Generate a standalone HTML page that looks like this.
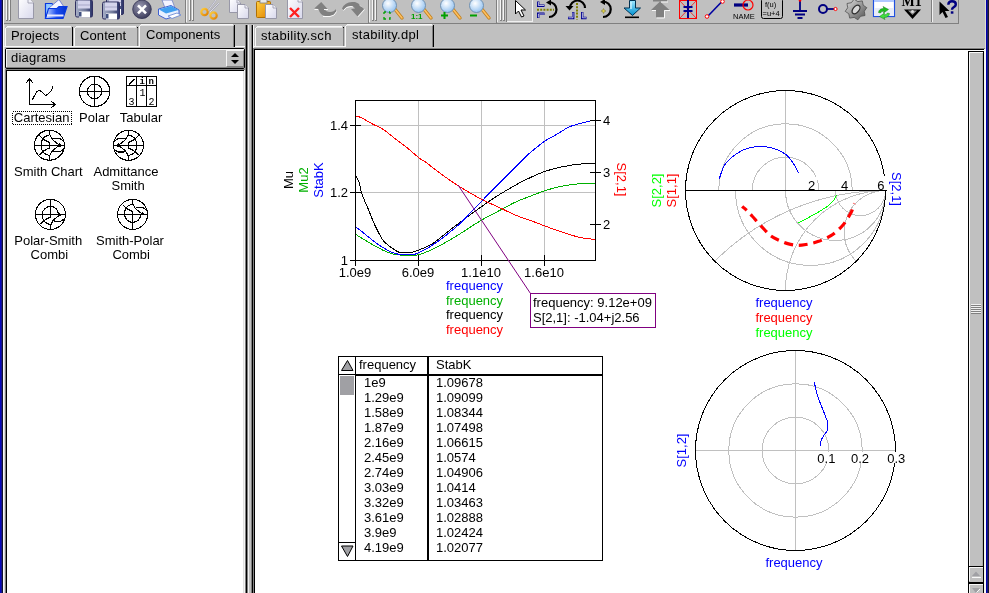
<!DOCTYPE html>
<html><head><meta charset="utf-8">
<style>
html,body{margin:0;padding:0;}
body{width:989px;height:593px;overflow:hidden;background:#c0c0c0;position:relative;font-family:"Liberation Sans",sans-serif;font-size:13px;color:#000;}
.a{position:absolute;}
.t{position:absolute;white-space:pre;line-height:1;}
svg{position:absolute;left:0;top:0;overflow:visible;}
.t,svg{will-change:transform;}
</style></head><body>
<div class="a" style="left:0px;top:0px;width:1px;height:593px;background:#0808c0;"></div>
<div class="a" style="left:1px;top:0px;width:1px;height:593px;background:#14148c;"></div>
<div class="a" style="left:2px;top:0px;width:1px;height:593px;background:#10102e;"></div>
<div class="a" style="left:3px;top:0px;width:1px;height:593px;background:#f8f8f8;"></div>
<div class="a" style="left:986px;top:0px;width:1px;height:593px;background:#0000b0;"></div>
<div class="a" style="left:987px;top:0px;width:1px;height:593px;background:#181878;"></div>
<div class="a" style="left:988px;top:0px;width:1px;height:593px;background:#1a1a2a;"></div>
<div class="a" style="left:985px;top:0px;width:1px;height:49px;background:#e0e0d0;"></div>
<div class="a" style="left:984px;top:49px;width:2px;height:544px;background:#f8f8f0;"></div>
<div class="a" style="left:4px;top:23px;width:955px;height:1px;background:#808080;"></div>
<div class="a" style="left:185px;top:0px;width:1px;height:23px;background:#808080;"></div>
<div class="a" style="left:186px;top:0px;width:1px;height:22px;background:#f0f0f0;"></div>
<div class="a" style="left:368px;top:0px;width:1px;height:23px;background:#808080;"></div>
<div class="a" style="left:369px;top:0px;width:1px;height:22px;background:#f0f0f0;"></div>
<div class="a" style="left:496px;top:0px;width:1px;height:23px;background:#808080;"></div>
<div class="a" style="left:497px;top:0px;width:1px;height:22px;background:#f0f0f0;"></div>
<div class="a" style="left:958px;top:0px;width:1px;height:23px;background:#808080;"></div>
<div class="a" style="left:6px;top:0px;width:1px;height:20px;background:#f4f4f4;"></div>
<div class="a" style="left:7px;top:0px;width:1px;height:21px;background:#808080;"></div>
<div class="a" style="left:6px;top:20px;width:2px;height:1px;background:#808080;"></div>
<div class="a" style="left:9px;top:0px;width:1px;height:20px;background:#f4f4f4;"></div>
<div class="a" style="left:10px;top:0px;width:1px;height:21px;background:#808080;"></div>
<div class="a" style="left:9px;top:20px;width:2px;height:1px;background:#808080;"></div>
<div class="a" style="left:189px;top:0px;width:1px;height:20px;background:#f4f4f4;"></div>
<div class="a" style="left:190px;top:0px;width:1px;height:21px;background:#808080;"></div>
<div class="a" style="left:189px;top:20px;width:2px;height:1px;background:#808080;"></div>
<div class="a" style="left:192px;top:0px;width:1px;height:20px;background:#f4f4f4;"></div>
<div class="a" style="left:193px;top:0px;width:1px;height:21px;background:#808080;"></div>
<div class="a" style="left:192px;top:20px;width:2px;height:1px;background:#808080;"></div>
<div class="a" style="left:372px;top:0px;width:1px;height:20px;background:#f4f4f4;"></div>
<div class="a" style="left:373px;top:0px;width:1px;height:21px;background:#808080;"></div>
<div class="a" style="left:372px;top:20px;width:2px;height:1px;background:#808080;"></div>
<div class="a" style="left:375px;top:0px;width:1px;height:20px;background:#f4f4f4;"></div>
<div class="a" style="left:376px;top:0px;width:1px;height:21px;background:#808080;"></div>
<div class="a" style="left:375px;top:20px;width:2px;height:1px;background:#808080;"></div>
<div class="a" style="left:500px;top:0px;width:1px;height:20px;background:#f4f4f4;"></div>
<div class="a" style="left:501px;top:0px;width:1px;height:21px;background:#808080;"></div>
<div class="a" style="left:500px;top:20px;width:2px;height:1px;background:#808080;"></div>
<div class="a" style="left:503px;top:0px;width:1px;height:20px;background:#f4f4f4;"></div>
<div class="a" style="left:504px;top:0px;width:1px;height:21px;background:#808080;"></div>
<div class="a" style="left:503px;top:20px;width:2px;height:1px;background:#808080;"></div>
<div class="a" style="left:506px;top:0px;width:1px;height:22px;background:#808080;"></div>
<div class="a" style="left:507px;top:0px;width:26px;height:22px;background:#c4c4c4;border-right:1px solid #f0f0f0;border-bottom:1px solid #f0f0f0;box-sizing:border-box"></div>
<div class="a" style="left:931px;top:0px;width:1px;height:22px;background:#808080;"></div>
<div class="a" style="left:932px;top:0px;width:1px;height:22px;background:#f0f0f0;"></div>
<!--TBI--><svg width="989" height="30"><defs>
<linearGradient id="gPage" x1="0" y1="0" x2="1" y2="1"><stop offset="0" stop-color="#ffffff"/><stop offset="1" stop-color="#d8d8ec"/></linearGradient>
<linearGradient id="gFold" x1="0" y1="0" x2="1" y2="0"><stop offset="0" stop-color="#c8dcff"/><stop offset="0.5" stop-color="#2050f0"/><stop offset="1" stop-color="#0030d0"/></linearGradient>
<linearGradient id="gDisk" x1="0" y1="0" x2="1" y2="0"><stop offset="0" stop-color="#a8b0c8"/><stop offset="0.6" stop-color="#707898"/><stop offset="1" stop-color="#283068"/></linearGradient>
<radialGradient id="gClose" cx="0.4" cy="0.35" r="0.7"><stop offset="0" stop-color="#9898b0"/><stop offset="1" stop-color="#383858"/></radialGradient>
<radialGradient id="gLens" cx="0.4" cy="0.35" r="0.7"><stop offset="0" stop-color="#ffffff"/><stop offset="1" stop-color="#90c0f0"/></radialGradient>
<linearGradient id="gOr" x1="0" y1="0" x2="1" y2="1"><stop offset="0" stop-color="#ffd040"/><stop offset="1" stop-color="#e08000"/></linearGradient>
<linearGradient id="gGear" x1="0" y1="0" x2="1" y2="1"><stop offset="0" stop-color="#e0e0e0"/><stop offset="1" stop-color="#505050"/></linearGradient>
<linearGradient id="gArrow" x1="0" y1="0" x2="0" y2="1"><stop offset="0" stop-color="#a0e8ff"/><stop offset="1" stop-color="#0090d0"/></linearGradient>
</defs>
<path d="M18.5 -2.5 H28 L33.5 3 V18.5 H18.5 Z" fill="url(#gPage)" stroke="#9898a8" stroke-width="1"/><path d="M28 -2.5 V3 H33.5" fill="#f0f0f8" stroke="#9898a8" stroke-width="0.8"/>
<path d="M45.5 3.5 H52 L53 5 H58 V18.5 H45.5 Z" fill="#90c8ff" stroke="#0838e0" stroke-width="1.2"/>
<path d="M49 8 L59 -0.5 L64 7 L54 15 Z" fill="#f4f4ff" stroke="#6070d0" stroke-width="0.8"/>
<path d="M48.5 8.5 H57 L59 6.5 H67 L63 18.5 H45.5 Z" fill="url(#gFold)" stroke="#0838e0" stroke-width="1.2"/>
<path d="M47 15.5 H63.5" stroke="#e8e8ff" stroke-width="2"/>
<rect x="75.5" y="0.0" width="17" height="17" rx="1.5" fill="url(#gDisk)" stroke="#303060" stroke-width="1"/><rect x="78" y="0.5" width="12" height="8" fill="#d4d4ec"/><path d="M78 5.0 H90" stroke="#a8a8c8" stroke-width="1"/><rect x="79" y="11.5" width="11" height="6" fill="#ffffff"/><rect x="79" y="12.0" width="2.5" height="4.5" fill="#405080"/>
<rect x="106.5" y="-2.5" width="17" height="17" rx="1.5" fill="url(#gDisk)" stroke="#303060" stroke-width="1"/><rect x="109" y="-2" width="12" height="8" fill="#d4d4ec"/><path d="M109 2.5 H121" stroke="#a8a8c8" stroke-width="1"/><rect x="110" y="9" width="11" height="6" fill="#ffffff"/><rect x="110" y="9.5" width="2.5" height="4.5" fill="#405080"/>
<rect x="102.5" y="2.0" width="17" height="17" rx="1.5" fill="url(#gDisk)" stroke="#303060" stroke-width="1"/><rect x="105" y="2.5" width="12" height="8" fill="#d4d4ec"/><path d="M105 7.0 H117" stroke="#a8a8c8" stroke-width="1"/><rect x="106" y="13.5" width="11" height="6" fill="#ffffff"/><rect x="106" y="14.0" width="2.5" height="4.5" fill="#405080"/>
<circle cx="142" cy="9.3" r="9.3" fill="url(#gClose)" stroke="#303050" stroke-width="0.8"/><path d="M138 5.3 L146 13.3 M146 5.3 L138 13.3" stroke="#fff" stroke-width="2.6"/>
<path d="M162 0 L172 0 L175 8 L165 8 Z" fill="#f4f4ff" stroke="#7080c0" stroke-width="0.8"/>
<path d="M158.5 9 L171 5.5 L179 10 L179 15 L166 19 L158.5 15 Z" fill="#e8f0ff" stroke="#4060d0" stroke-width="1"/>
<path d="M159 9.5 L171 6 L178.5 10 L166 13.5 Z" fill="#40a0f0"/>
<path d="M168 16 L177 13 L181 15 L172 18.5 Z" fill="#ffffff" stroke="#6080d0" stroke-width="0.8"/>
<path d="M208 11 L216 0 M210 12 L219 3" stroke="#a0a0b0" stroke-width="1.6"/><path d="M208 11 L216 0 M210 12 L219 3" stroke="#f0f0f8" stroke-width="0.7"/>
<circle cx="204.5" cy="12" r="3.2" fill="none" stroke="url(#gOr)" stroke-width="2.2"/><circle cx="213.5" cy="15.5" r="3.2" fill="none" stroke="url(#gOr)" stroke-width="2.2"/>
<path d="M229.5 -0.5 H237 L240.5 3 V12.5 H229.5 Z" fill="url(#gPage)" stroke="#9898a8" stroke-width="1"/><path d="M237 -0.5 V3 H240.5" fill="#f0f0f8" stroke="#9898a8" stroke-width="0.8"/>
<path d="M237.5 4.5 H245 L248.5 8 V18.5 H237.5 Z" fill="url(#gPage)" stroke="#9898a8" stroke-width="1"/><path d="M245 4.5 V8 H248.5" fill="#f0f0f8" stroke="#9898a8" stroke-width="0.8"/>
<rect x="256.5" y="1.5" width="14" height="16" rx="1" fill="url(#gOr)" stroke="#b07000" stroke-width="1"/><rect x="260" y="-1" width="7" height="4" fill="#e8e8e8" stroke="#808080" stroke-width="0.8"/>
<path d="M265.5 4.5 H273 L276.5 8 V18.5 H265.5 Z" fill="url(#gPage)" stroke="#9898a8" stroke-width="1"/><path d="M273 4.5 V8 H276.5" fill="#f0f0f8" stroke="#9898a8" stroke-width="0.8"/>
<path d="M287.5 -2.5 H298 L302.5 2 V18.5 H287.5 Z" fill="url(#gPage)" stroke="#9898a8" stroke-width="1"/><path d="M298 -2.5 V2 H302.5" fill="#f0f0f8" stroke="#9898a8" stroke-width="0.8"/>
<path d="M290 8 L299 17 M299 8 L290 17" stroke="#ff2020" stroke-width="2.4"/>
<path d="M314.2 8.5 L321.2 2 L327.6 9 L324.5 9 Q326 12 330 12 Q334 12 336 9 L336 12 Q334 16 329 16 L325 16 Q320 15 318.5 9 Z" fill="#808080"/>
<path d="M323 16.5 H330 Q335 16 336.5 11.5 M314.5 9.5 h3.5 M324 9.5 h4" fill="none" stroke="#f8f8f8" stroke-width="1"/>
<path d="M342 8.5 Q345 2 352 2 L355 2 Q359 3 360.5 6 L364 9 L357.5 16.5 L351 9 L355 8.5 Q354 6 351 6 Q346 6 343.5 10 Z" fill="#808080"/>
<path d="M343.5 10.5 Q346 6.5 351 6.5 L353 7 M358 16.8 L364.5 9.5 M360 5.5 L361 6.5" fill="none" stroke="#f8f8f8" stroke-width="1"/>
<path d="M394 8 L402 18" stroke="#c08020" stroke-width="3.4" stroke-linecap="round"/><path d="M394 8 L402 18" stroke="#ffc060" stroke-width="1.6" stroke-linecap="round"/>
<circle cx="389.5" cy="5.5" r="7" fill="url(#gLens)" stroke="#7090b0" stroke-width="1"/>
<path d="M384 12 h2 M384 12 v2 M384 17 v2 h2 M389 12 h1 M390 12 v2 M390 17 v2 h-1" stroke="#00a000" stroke-width="1.3" fill="none"/>
<path d="M423 8 L431 18" stroke="#c08020" stroke-width="3.4" stroke-linecap="round"/><path d="M423 8 L431 18" stroke="#ffc060" stroke-width="1.6" stroke-linecap="round"/>
<circle cx="418.5" cy="5.5" r="7" fill="url(#gLens)" stroke="#7090b0" stroke-width="1"/>
<text x="411" y="19" font-family="Liberation Sans" font-weight="bold" font-size="8" fill="#00a000">1:1</text>
<path d="M452 8 L460 18" stroke="#c08020" stroke-width="3.4" stroke-linecap="round"/><path d="M452 8 L460 18" stroke="#ffc060" stroke-width="1.6" stroke-linecap="round"/>
<circle cx="447.5" cy="5.5" r="7" fill="url(#gLens)" stroke="#7090b0" stroke-width="1"/>
<path d="M441 15.5 h7 M444.5 12 v7" stroke="#00a000" stroke-width="2"/>
<path d="M481 8 L489 18" stroke="#c08020" stroke-width="3.4" stroke-linecap="round"/><path d="M481 8 L489 18" stroke="#ffc060" stroke-width="1.6" stroke-linecap="round"/>
<circle cx="476.5" cy="5.5" r="7" fill="url(#gLens)" stroke="#7090b0" stroke-width="1"/>
<path d="M470 15.5 h7" stroke="#00a000" stroke-width="2"/>
<path d="M515.5 0.5 L515.5 14 L518.5 11 L521.5 17 L524 16 L521 10 L525.5 10 Z" fill="#fff" stroke="#000" stroke-width="1"/>
<path d="M538.2 1.5 V5.7 H544.5 M538.2 18 V13.8 H544.5" fill="none" stroke="#000090" stroke-width="2.4"/><path d="M538.4 2 V5.5 H544 M538.4 17.5 V14 H544" fill="none" stroke="#fff" stroke-width="0.7"/>
<path d="M537 9.7 H554" stroke="#808000" stroke-width="2" stroke-dasharray="2 1.2"/>
<path d="M549 2 A7.5 7.5 0 0 1 549 17" fill="none" stroke="#000" stroke-width="2.2"/><path d="M546 2.5 L551 -0.5 L551 5.5 Z" fill="#000"/>
<path d="M573.2 12 V18 H568 M582.2 12 V18 H586.5" fill="none" stroke="#000090" stroke-width="2.4"/><path d="M573 12.5 V17.8 H568.5 M582.4 12.5 V17.8 H586" fill="none" stroke="#fff" stroke-width="0.7"/>
<path d="M577 3 V19.5" stroke="#808000" stroke-width="2" stroke-dasharray="2 1.2"/>
<path d="M570 8 A7.5 7.5 0 0 1 585 8" fill="none" stroke="#000" stroke-width="2.2"/><path d="M565.5 6 L573.5 6 L569.5 10.5 Z" fill="#000"/>
<path d="M603 1.5 A7.5 7.5 0 0 1 603 17" fill="none" stroke="#000" stroke-width="2.2"/><path d="M600 2 L605 -1 L605 5 Z" fill="#000"/><path d="M603.5 8.5 L604.3 10.2 L606 11 L604.3 11.8 L603.5 13.5 L602.7 11.8 L601 11 L602.7 10.2 Z" fill="#e0d040" stroke="#606020" stroke-width="0.4"/>
<path d="M629.5 0.5 H635.5 V8 H640.5 L632.5 15.5 L624 8 H629.5 Z" fill="url(#gArrow)" stroke="#003050" stroke-width="1"/><path d="M631 2 V9" stroke="#e0f8ff" stroke-width="1.2"/><rect x="625" y="16.5" width="14" height="1.6" fill="#000"/>
<path d="M653 0 H667 V1.5 H653 Z M660 1.5 L669.5 10 H664 V17.5 H656 V10 H651 Z" fill="#808080"/><path d="M664.5 10.5 V18 H656.5 M664.5 10.5 H670 M652 10.5 H656 M661 2 L668 2" fill="none" stroke="#f8f8f8" stroke-width="1"/>
<rect x="679.5" y="0.5" width="17" height="18" fill="none" stroke="#ff0000" stroke-width="1"/><path d="M680 1 L696 18 M696 1 L680 18" stroke="#ff0000" stroke-width="0.7"/><path d="M688 0 V18" stroke="#000090" stroke-width="2"/><path d="M683.5 7 H692.5 M683.5 11 H692.5" stroke="#000090" stroke-width="1.8"/>
<path d="M707.5 16.5 L722 1.5" stroke="#0000a0" stroke-width="1.6"/><circle cx="707" cy="16.5" r="1.8" fill="#fff" stroke="#ff0000" stroke-width="1"/><circle cx="722.5" cy="1.5" r="1.8" fill="#fff" stroke="#ff0000" stroke-width="1"/>
<path d="M734 5 H748" stroke="#000080" stroke-width="3.2"/><circle cx="748" cy="5" r="5" fill="none" stroke="#ff0000" stroke-width="1.2"/><text x="733" y="19" font-family="Liberation Sans" font-size="7.5" fill="#000">NAME</text>
<rect x="761.5" y="-1.5" width="21" height="20" rx="2" fill="none" stroke="#000" stroke-width="1"/><text x="765" y="7" font-family="Liberation Sans" font-size="7.5">f(u)</text><text x="762.5" y="15.5" font-family="Liberation Sans" font-size="7.5">=u+4</text>
<path d="M800 1 V11 M793 11 H807 M795 14.5 H805 M797.5 18 H802.5" stroke="#000080" stroke-width="1.8"/><circle cx="800" cy="0.5" r="1.3" fill="#ff0000"/>
<circle cx="823" cy="9" r="4" fill="none" stroke="#000080" stroke-width="2"/><path d="M827 9 H834" stroke="#000080" stroke-width="1.8"/><circle cx="835.5" cy="9" r="1.6" fill="#fff" stroke="#ff0000" stroke-width="1"/>
<path d="M866.8 7.7 L864.3 11.2 L865.0 15.5 L860.6 16.3 L857.9 19.8 L854.2 17.4 L849.7 18.1 L848.8 13.8 L845.2 11.3 L847.7 7.8 L847.0 3.5 L851.4 2.7 L854.1 -0.8 L857.8 1.6 L862.3 0.9 L863.2 5.2 Z" fill="url(#gGear)" stroke="#505050" stroke-width="0.8"/>
<ellipse cx="856" cy="9.5" rx="5" ry="3" transform="rotate(-50 856 9.5)" fill="#d8d8d8" stroke="#303030" stroke-width="1.3"/>
<rect x="873.5" y="-1.5" width="21" height="18" fill="#fff" stroke="#2050e0" stroke-width="1.2"/><rect x="874" y="-1" width="20" height="3" fill="#b0c8ff"/><rect x="874" y="8" width="20" height="8" fill="#e8ecf8"/>
<path d="M878.5 12.5 Q879 8.5 884 8.5 L883 6.5 L888.5 9.5 L883.5 13 L884 11 Q881.5 11 880.5 13 Z" fill="#20c020" stroke="#108010" stroke-width="0.5"/><path d="M889.5 13.5 Q889 17.5 884 17.5 L885 19.5 L879.5 16.5 L884.5 13 L884 15 Q886.5 15 887.5 13 Z" fill="#40e040" stroke="#108010" stroke-width="0.5"/>
<text x="901.5" y="6" font-family="Liberation Serif" font-weight="bold" font-size="14" fill="#000">M1</text><path d="M904 9.5 L921 9.5 L912.5 19 Z" fill="#000"/><path d="M908 10.5 L917 10.5 L912.5 15 Z" fill="#909090"/><circle cx="912.5" cy="11.5" r="1.5" fill="#e0e0e0"/>
<path d="M939.5 1.5 L939.5 15 L942.5 12 L945.5 18 L948 17 L945 11 L949.5 11 Z" fill="#000"/><path d="M948.3 4.8 Q948.5 1.3 952 1.3 Q955.8 1.3 955.8 4.3 Q955.8 6.3 953.5 7.3 Q952 8 952 9.8" fill="none" stroke="#000080" stroke-width="2.4"/><rect x="950.8" y="11.3" width="2.6" height="2.4" fill="#000080"/>
</svg><!--/TBI-->
<div class="a" style="left:4px;top:25px;width:1px;height:568px;background:#d8d8d8;"></div>
<div class="a" style="left:245px;top:25px;width:1px;height:568px;background:#808080;"></div>
<div class="a" style="left:246px;top:25px;width:1px;height:568px;background:#000;"></div>
<div class="a" style="left:247px;top:25px;width:1px;height:568px;background:#808080;"></div>
<div class="a" style="left:248px;top:25px;width:1px;height:568px;background:#f0f0f0;"></div>
<div class="a" style="left:251px;top:25px;width:1px;height:568px;background:#808080;"></div>
<div class="a" style="left:252px;top:25px;width:1px;height:568px;background:#000;"></div>
<div class="a" style="left:5px;top:26px;width:68px;height:21px;background:#c0c0c0;"></div>
<div class="a" style="left:7px;top:26px;width:64px;height:1px;background:#f8f8f8;"></div>
<div class="a" style="left:6px;top:27px;width:65px;height:1px;background:#e4e4e4;"></div>
<div class="a" style="left:5px;top:28px;width:1px;height:19px;background:#f8f8f8;"></div>
<div class="a" style="left:6px;top:27px;width:1px;height:1px;background:#f8f8f8;"></div>
<div class="a" style="left:72px;top:27px;width:1px;height:19px;background:#808080;"></div>
<div class="a" style="left:72px;top:27px;width:1px;height:1px;background:#000;"></div>
<div class="a" style="left:72px;top:27px;width:1px;height:19px;background:#000;"></div>
<div class="a" style="left:74px;top:26px;width:64px;height:21px;background:#c0c0c0;"></div>
<div class="a" style="left:76px;top:26px;width:60px;height:1px;background:#f8f8f8;"></div>
<div class="a" style="left:75px;top:27px;width:61px;height:1px;background:#e4e4e4;"></div>
<div class="a" style="left:74px;top:28px;width:1px;height:19px;background:#f8f8f8;"></div>
<div class="a" style="left:75px;top:27px;width:1px;height:1px;background:#f8f8f8;"></div>
<div class="a" style="left:137px;top:27px;width:1px;height:19px;background:#808080;"></div>
<div class="a" style="left:137px;top:27px;width:1px;height:1px;background:#000;"></div>
<div class="a" style="left:139px;top:24px;width:96px;height:23px;background:#c0c0c0;"></div>
<div class="a" style="left:141px;top:24px;width:92px;height:1px;background:#f8f8f8;"></div>
<div class="a" style="left:140px;top:25px;width:93px;height:1px;background:#e4e4e4;"></div>
<div class="a" style="left:139px;top:26px;width:1px;height:21px;background:#f8f8f8;"></div>
<div class="a" style="left:140px;top:25px;width:1px;height:1px;background:#f8f8f8;"></div>
<div class="a" style="left:233px;top:26px;width:1px;height:21px;background:#808080;"></div>
<div class="a" style="left:234px;top:25px;width:1px;height:22px;background:#000;"></div>
<div class="a" style="left:4px;top:46px;width:135px;height:1px;background:#f8f8f8;"></div>
<div class="a" style="left:235px;top:46px;width:10px;height:1px;background:#f8f8f8;"></div>
<div class="t" style="left:11px;top:29px;letter-spacing:0.2px">Projects</div>
<div class="t" style="left:80px;top:29px;letter-spacing:0.1px">Content</div>
<div class="t" style="left:146px;top:28px;letter-spacing:0.05px">Components</div>
<div class="a" style="left:5px;top:48px;width:240px;height:21px;background:#c0c0c0;box-sizing:border-box;border:1px solid #000;border-radius:2px"></div>
<div class="a" style="left:6px;top:49px;width:238px;height:1px;background:#f4f4f4;"></div>
<div class="a" style="left:6px;top:49px;width:1px;height:18px;background:#f4f4f4;"></div>
<div class="a" style="left:6px;top:67px;width:238px;height:1px;background:#808080;"></div>
<div class="a" style="left:226px;top:50px;width:18px;height:17px;background:#c0c0c0;box-sizing:border-box;border-left:1px solid #f4f4f4;border-top:1px solid #f4f4f4;border-right:1px solid #808080;border-bottom:1px solid #808080"></div>
<svg width="989" height="593"><path d="M235 53 L239 57 L231 57 Z M231 60 L239 60 L235 64 Z" fill="#000"/></svg>
<div class="t" style="left:11px;top:51px;letter-spacing:0.2px">diagrams</div>
<div class="a" style="left:5px;top:69px;width:240px;height:524px;background:#808080;"></div>
<div class="a" style="left:6px;top:70px;width:238px;height:523px;background:#000;"></div>
<div class="a" style="left:7px;top:71px;width:236px;height:522px;background:#fff;"></div>
<div class="a" style="left:243px;top:71px;width:1px;height:522px;background:#e0e0e0;"></div>
<div class="a" style="left:244px;top:70px;width:1px;height:523px;background:#f4f4f4;"></div>
<!--ICONS--><svg width="989" height="593"><g fill="none" stroke="#000" stroke-width="1.1" stroke-linecap="square" shape-rendering="crispEdges">
<path d="M29.5 78.5 V104.5 H55.5 M26.5 82.5 L29.5 78.5 L32.5 82.5 M51.5 101.5 L55.5 104.5 L51.5 107.5"/>
<path d="M32.5 99.3 L36.9 91.6 L39.6 90.3 L41.6 91.6 L45.6 95.5 L48.3 93.9 L51.7 90.2 L52.7 86.2" stroke-linejoin="round"/>
<circle cx="94.6" cy="91.4" r="15.2"/><circle cx="94.6" cy="91.4" r="7.3"/><path d="M79.39999999999999 91.4 H109.8 M94.6 76.2 V106.60000000000001"/>
<rect x="126.5" y="76.5" width="30" height="30" stroke-width="1"/><path d="M127 85.5 H156 M136.5 77 V106 M146.5 77 V106" stroke-width="1"/>
<path d="M129.5 84 L134 79.5" stroke-width="1.2"/>
</g>
<g font-family="Liberation Mono" font-size="9" fill="#000"><text x="139.5" y="84" font-weight="bold">i</text><text x="148.5" y="84" font-weight="bold">n</text><text x="139.5" y="96" font-size="10">1</text><text x="128.5" y="105" font-size="10">3</text><text x="148.5" y="105" font-size="10">2</text></g>
<g fill="none" stroke="#000" stroke-width="1.1" shape-rendering="crispEdges">
<circle cx="49.4" cy="145.2" r="15"/><path d="M34.4 145.2 H64.4"/>
<path d="M49.4 130.2 L49.4 134.0 L50.8 136.8 L52.2 139.3 L54.7 141.5 L57.5 143.6 L59.4 145.2 M39.4 135.4 L43.0 139.0 L46.4 141.0 L49.4 142.4 L49.4 145.2 M41.3 145.2 L41.9 140.7 L44.1 137.3 L46.4 136.0 L48.6 135.1 L50.3 134.8 M51.9 139.0 L54.1 138.5 L59.7 138.5 L63.0 140.7 M49.4 160.2 L49.4 156.4 L50.8 153.6 L52.2 151.1 L54.7 148.9 L57.5 146.8 L59.4 145.2 M39.4 155.0 L43.0 151.4 L46.4 149.4 L49.4 148.0 L49.4 145.2 M41.3 145.2 L41.9 149.7 L44.1 153.1 L46.4 154.4 L48.6 155.3 L50.3 155.6 M51.9 151.4 L54.1 151.9 L59.7 151.9 L63.0 149.7"/>
<circle cx="59.4" cy="145.2" r="1.3" fill="#000"/>
<circle cx="128.5" cy="145.3" r="15"/><path d="M113.5 145.3 H143.5"/>
<path d="M128.5 130.3 L128.5 134.1 L127.1 136.9 L125.7 139.4 L123.2 141.6 L120.4 143.7 L118.5 145.3 M138.5 135.5 L134.9 139.1 L131.5 141.1 L128.5 142.5 L128.5 145.3 M136.6 145.3 L136.0 140.8 L133.8 137.4 L131.5 136.1 L129.3 135.2 L127.6 134.9 M126.0 139.1 L123.8 138.6 L118.2 138.6 L114.9 140.8 M128.5 160.3 L128.5 156.5 L127.1 153.7 L125.7 151.2 L123.2 149.0 L120.4 146.9 L118.5 145.3 M138.5 155.1 L134.9 151.5 L131.5 149.5 L128.5 148.1 L128.5 145.3 M136.6 145.3 L136.0 149.8 L133.8 153.2 L131.5 154.5 L129.3 155.4 L127.6 155.7 M126.0 151.5 L123.8 152.0 L118.2 152.0 L114.9 149.8"/>
<circle cx="118.5" cy="145.3" r="1.3" fill="#000"/>
<circle cx="50.4" cy="214.4" r="15"/><path d="M35.4 214.4 H65.4"/>
<path d="M42.4 214.4 A8 8 0 0 1 58.4 214.4 M50.4 214.4 V199.4 M50.4 229.4 L50.4 225.6 L51.8 222.8 L53.2 220.3 L55.7 218.1 L58.5 216.0 L60.4 214.4 M40.4 224.2 L44.0 220.6 L47.4 218.6 L50.4 217.2 L50.4 214.4 M42.3 214.4 L42.9 218.9 L45.1 222.3 L47.4 223.6 L49.6 224.5 L51.3 224.8 M52.9 220.6 L55.1 221.1 L60.7 221.1 L64.0 218.9"/>
<circle cx="59.9" cy="214.9" r="1" fill="#000"/>
<circle cx="132.6" cy="214.4" r="15"/><path d="M117.6 214.4 H147.6"/>
<path d="M132.6 199.4 L132.6 203.2 L134.0 206.0 L135.4 208.5 L137.9 210.7 L140.7 212.8 L142.6 214.4 M122.6 204.6 L126.2 208.2 L129.6 210.2 L132.6 211.6 L132.6 214.4 M124.5 214.4 L125.1 209.9 L127.3 206.5 L129.6 205.2 L131.8 204.3 L133.5 204.0 M135.1 208.2 L137.3 207.7 L142.9 207.7 L146.2 209.9 M124.6 214.4 A8 8 0 0 0 140.6 214.4 M132.6 214.4 V229.4"/>
<circle cx="142.1" cy="213.9" r="1" fill="#000"/>
</g>
<g font-family="Liberation Sans" font-size="13" fill="#000" text-anchor="middle">
<text x="41.6" y="121.6">Cartesian</text>
<text x="94.3" y="121.6">Polar</text>
<text x="141" y="121.6">Tabular</text>
<text x="48.4" y="175.8">Smith Chart</text>
<text x="126" y="175.8">Admittance</text>
<text x="128.1" y="190.4">Smith</text>
<text x="48.2" y="245">Polar-Smith</text>
<text x="49.4" y="259.4">Combi</text>
<text x="130" y="245">Smith-Polar</text>
<text x="131.2" y="259.4">Combi</text>
</g>
<rect x="12.5" y="111.5" width="59" height="13" fill="none" stroke="#000" stroke-width="1" stroke-dasharray="1 1" shape-rendering="crispEdges"/>
</svg><!--/ICONS-->
<div class="a" style="left:253px;top:25px;width:1px;height:568px;background:#f4f4f4;"></div>
<div class="a" style="left:255px;top:26px;width:89px;height:21px;background:#c0c0c0;"></div>
<div class="a" style="left:257px;top:26px;width:85px;height:1px;background:#f8f8f8;"></div>
<div class="a" style="left:256px;top:27px;width:86px;height:1px;background:#e4e4e4;"></div>
<div class="a" style="left:255px;top:28px;width:1px;height:19px;background:#f8f8f8;"></div>
<div class="a" style="left:256px;top:27px;width:1px;height:1px;background:#f8f8f8;"></div>
<div class="a" style="left:343px;top:27px;width:1px;height:19px;background:#808080;"></div>
<div class="a" style="left:343px;top:27px;width:1px;height:1px;background:#000;"></div>
<div class="a" style="left:345px;top:24px;width:89px;height:23px;background:#c0c0c0;"></div>
<div class="a" style="left:347px;top:24px;width:85px;height:1px;background:#f8f8f8;"></div>
<div class="a" style="left:346px;top:25px;width:86px;height:1px;background:#e4e4e4;"></div>
<div class="a" style="left:345px;top:26px;width:1px;height:21px;background:#f8f8f8;"></div>
<div class="a" style="left:346px;top:25px;width:1px;height:1px;background:#f8f8f8;"></div>
<div class="a" style="left:432px;top:26px;width:1px;height:21px;background:#808080;"></div>
<div class="a" style="left:433px;top:25px;width:1px;height:22px;background:#000;"></div>
<div class="a" style="left:253px;top:46px;width:92px;height:1px;background:#f8f8f8;"></div>
<div class="a" style="left:434px;top:47px;width:550px;height:1px;background:#c8c8c8;"></div>
<div class="t" style="left:261px;top:29px;letter-spacing:0.35px">stability.sch</div>
<div class="t" style="left:352px;top:28px;letter-spacing:0.3px">stability.dpl</div>
<div class="a" style="left:253px;top:48px;width:732px;height:1px;background:#808080;"></div>
<div class="a" style="left:253px;top:48px;width:1px;height:545px;background:#808080;"></div>
<div class="a" style="left:254px;top:49px;width:730px;height:1px;background:#000;"></div>
<div class="a" style="left:254px;top:49px;width:1px;height:544px;background:#000;"></div>
<div class="a" style="left:255px;top:50px;width:729px;height:543px;background:#fff;"></div>
<div class="a" style="left:984px;top:49px;width:1px;height:544px;background:#f4f4f4;"></div>
<div class="a" style="left:968px;top:51px;width:16px;height:516px;background:#c0c0c0;box-sizing:border-box;border:1px solid #000"></div>
<div class="a" style="left:969px;top:52px;width:14px;height:1px;background:#f8f8f8;"></div>
<div class="a" style="left:969px;top:52px;width:1px;height:514px;background:#f8f8f8;"></div>
<div class="a" style="left:982px;top:53px;width:1px;height:513px;background:#a8a8a8;"></div>
<div class="a" style="left:971px;top:304px;width:10px;height:1px;background:#f0f0f0;"></div>
<div class="a" style="left:971px;top:305px;width:10px;height:1px;background:#808080;"></div>
<div class="a" style="left:971px;top:306px;width:10px;height:1px;background:#f0f0f0;"></div>
<div class="a" style="left:971px;top:307px;width:10px;height:1px;background:#808080;"></div>
<div class="a" style="left:971px;top:308px;width:10px;height:1px;background:#f0f0f0;"></div>
<div class="a" style="left:971px;top:309px;width:10px;height:1px;background:#808080;"></div>
<div class="a" style="left:971px;top:310px;width:10px;height:1px;background:#f0f0f0;"></div>
<div class="a" style="left:971px;top:311px;width:10px;height:1px;background:#808080;"></div>
<div class="a" style="left:971px;top:312px;width:10px;height:1px;background:#f0f0f0;"></div>
<div class="a" style="left:971px;top:313px;width:10px;height:1px;background:#808080;"></div>
<div class="a" style="left:968px;top:566px;width:16px;height:17px;background:#c0c0c0;box-sizing:border-box;border:1px solid #000"></div>
<div class="a" style="left:969px;top:567px;width:14px;height:1px;background:#f8f8f8;"></div>
<div class="a" style="left:969px;top:567px;width:1px;height:14px;background:#f8f8f8;"></div>
<div class="a" style="left:968px;top:583px;width:16px;height:17px;background:#c0c0c0;box-sizing:border-box;border:1px solid #000"></div>
<div class="a" style="left:969px;top:584px;width:14px;height:1px;background:#f8f8f8;"></div>
<div class="a" style="left:969px;top:584px;width:1px;height:14px;background:#f8f8f8;"></div>
<svg width="989" height="593"><path d="M976 571.5 L980 576 L972 576 Z" fill="#a0a0a4"/><path d="M972 577.5 h9" stroke="#f8f8f8"/><path d="M972 588 L980 588 L976 593 Z" fill="#a0a0a4"/><path d="M976.5 592.5 L980 589" stroke="#f8f8f8"/></svg>
<!--CANVAS--><svg width="989" height="593"><defs><clipPath id="cv"><rect x="255" y="50" width="713" height="543"/></clipPath></defs><g clip-path="url(#cv)">
<g stroke="#c0c0c0" stroke-width="1" shape-rendering="crispEdges">
<path d="M418.5 101 V260"/>
<path d="M481.5 101 V260"/>
<path d="M544.5 101 V260"/>
<path d="M356 125.5 H595"/>
<path d="M356 192.5 H595"/>
</g>
<g fill="none" stroke-width="1" stroke-linejoin="round" shape-rendering="crispEdges">
<path d="M355.0 234.0 C358.4 236.0 369.8 243.1 375.2 246.1 C380.6 249.1 383.6 250.7 387.4 252.2 C391.2 253.7 393.7 254.4 398.2 254.9 C402.7 255.4 410.3 255.5 414.4 255.3 C418.4 255.1 419.1 254.7 422.5 253.5 C425.9 252.3 429.3 251.1 435.0 248.2 C440.7 245.3 449.0 240.6 456.6 236.0 C464.2 231.4 473.2 225.0 480.9 220.5 C488.5 216.0 496.8 212.0 502.5 209.0 C508.2 206.0 510.7 204.3 515.0 202.3 C519.3 200.3 523.5 198.8 528.5 196.9 C533.5 195.0 539.5 192.5 544.7 190.8 C549.9 189.1 553.6 187.9 559.5 186.7 C565.4 185.5 573.9 184.2 579.8 183.6 C585.7 183.0 592.5 183.4 595.0 183.3" stroke="#00b000"/>
<path d="M355.0 174.5 C355.7 175.8 357.9 178.8 359.0 182.0 C360.1 185.2 360.1 188.9 361.7 193.5 C363.3 198.1 366.2 204.3 368.5 209.7 C370.8 215.1 372.6 220.6 375.2 225.9 C377.8 231.2 380.4 237.2 384.0 241.4 C387.6 245.6 393.9 249.2 396.8 251.1 C399.7 252.9 399.1 252.3 401.6 252.5 C404.1 252.7 408.9 252.6 411.7 252.2 C414.5 251.8 415.7 251.2 418.4 250.2 C421.1 249.2 425.1 247.5 427.9 246.1 C430.7 244.7 430.4 245.4 435.0 242.0 C439.6 238.6 448.0 231.4 455.2 225.9 C462.4 220.4 471.4 213.8 478.2 209.0 C484.9 204.2 489.6 200.8 495.7 196.9 C501.8 193.0 510.1 188.2 515.0 185.4 C519.9 182.6 520.1 182.3 525.1 180.0 C530.1 177.7 538.5 173.7 544.7 171.5 C550.9 169.3 556.4 168.0 562.2 166.8 C568.1 165.6 574.3 164.6 579.8 164.1 C585.3 163.6 592.5 164.0 595.0 164.0" stroke="#000"/>
<path d="M355.0 227.5 C355.7 227.8 355.6 226.8 359.0 229.3 C362.4 231.8 370.5 238.8 375.2 242.3 C379.9 245.8 383.6 248.2 387.4 250.2 C391.2 252.2 394.1 253.5 398.2 254.2 C402.2 254.9 408.3 254.7 411.7 254.5 C415.1 254.3 414.5 254.7 418.4 252.9 C422.3 251.1 428.6 247.9 435.0 243.5 C441.4 239.1 450.1 232.3 456.6 226.6 C463.1 220.8 468.0 215.2 474.1 209.0 C480.2 202.8 488.3 194.2 493.0 189.4 C497.7 184.6 498.8 183.7 502.5 180.0 C506.2 176.3 510.9 171.6 515.0 167.5 C519.1 163.4 523.7 158.5 527.1 155.3 C530.5 152.2 532.3 150.9 535.2 148.6 C538.1 146.2 541.3 143.4 544.7 141.2 C548.1 138.9 551.5 137.5 555.5 135.1 C559.5 132.7 565.2 128.8 569.0 127.0 C572.8 125.2 574.8 125.0 578.4 124.0 C582.0 123.0 587.8 121.5 590.6 120.9 C593.4 120.3 594.3 120.6 595.0 120.5" stroke="#0000ff"/>
<path d="M355.0 116.5 C355.9 116.6 357.5 116.0 360.4 117.3 C363.3 118.5 368.7 122.0 372.5 124.0 C376.3 126.0 379.5 126.9 383.3 129.4 C387.1 131.9 391.2 135.8 395.5 139.1 C399.8 142.4 405.1 146.2 409.0 149.3 C412.9 152.5 416.4 155.9 419.1 158.0 C421.8 160.1 422.6 159.9 425.2 161.8 C427.8 163.7 430.9 166.3 435.0 169.3 C439.1 172.3 445.0 176.9 449.5 180.0 C454.0 183.1 456.6 184.8 462.0 188.1 C467.4 191.4 475.4 196.1 482.2 199.6 C488.9 203.1 497.0 206.4 502.5 209.0 C508.0 211.6 510.7 213.2 515.0 215.0 C519.3 216.8 523.5 218.0 528.5 219.8 C533.5 221.6 539.5 224.0 544.7 225.9 C549.9 227.8 553.6 229.4 559.5 231.3 C565.4 233.2 573.9 236.1 579.8 237.4 C585.7 238.8 592.5 239.1 595.0 239.4" stroke="#ff0000"/>
</g>
<g stroke="#000" stroke-width="1" fill="none" shape-rendering="crispEdges">
<rect x="355.5" y="100.5" width="240" height="160"/>
<path d="M350 125.5 H361"/>
<path d="M350 192.5 H361"/>
<path d="M350 260.5 H361"/>
<path d="M355.5 255 V266"/>
<path d="M418.5 255 V266"/>
<path d="M481.5 255 V266"/>
<path d="M544.5 255 V266"/>
<path d="M590 120.5 H601"/>
<path d="M590 172.5 H601"/>
<path d="M590 224.5 H601"/>
</g>
<g font-family="Liberation Sans" font-size="13" fill="#000">
<text x="348" y="130" text-anchor="end">1.4</text>
<text x="348" y="197" text-anchor="end">1.2</text>
<text x="348" y="265" text-anchor="end">1</text>
<text x="355" y="277" text-anchor="middle">1.0e9</text>
<text x="418" y="277" text-anchor="middle">6.0e9</text>
<text x="481" y="277" text-anchor="middle">1.1e10</text>
<text x="544" y="277" text-anchor="middle">1.6e10</text>
<text x="603" y="125">4</text>
<text x="603" y="177">3</text>
<text x="603" y="229">2</text>
</g>
<g font-family="Liberation Sans" font-size="13">
<text transform="translate(292.5,180) rotate(-90)" text-anchor="middle" fill="#000">Mu</text>
<text transform="translate(307.5,180) rotate(-90)" text-anchor="middle" fill="#00b000">Mu2</text>
<text transform="translate(322.5,180) rotate(-90)" text-anchor="middle" fill="#0000ff">StabK</text>
<text transform="translate(616.5,179.5) rotate(90)" text-anchor="middle" fill="#ff0000">S[2,1]</text>
<text x="446" y="289.7" fill="#0000ff">frequency</text>
<text x="446" y="304.6" fill="#00b000">frequency</text>
<text x="446" y="319.4" fill="#000">frequency</text>
<text x="446" y="334.2" fill="#ff0000">frequency</text>
</g>
<path d="M458 185 L530.5 293.5" stroke="#800080" stroke-width="1" fill="none"/>
<rect x="530.5" y="293.5" width="125" height="34" fill="#fff" stroke="#800080" stroke-width="1" shape-rendering="crispEdges"/>
<text x="533" y="307" font-family="Liberation Sans" font-size="13">frequency: 9.12e+09</text>
<text x="533" y="322" font-family="Liberation Sans" font-size="13">S[2,1]: -1.04+j2.56</text>
<g fill="none" stroke="#c0c0c0" stroke-width="1" shape-rendering="crispEdges">
<path d="M752.167 190.5 A33.333 33.333 0 0 1 818.833 190.5"/>
<path d="M718.833 190.5 A66.667 66.667 0 0 1 852.167 190.5"/>
<path d="M785.5 90.5 V190.5" shape-rendering="crispEdges"/>
<path d="M735.5 190.5 A75 75 0 0 0 885.5 190.5"/>
<path d="M785.5 190.5 A50 50 0 0 0 885.5 190.5"/>
<path d="M835.5 190.5 A25 25 0 0 0 885.5 190.5"/>
<path d="M885.5 190.5 A41.421 41.421 0 0 0 856.21 261.21"/>
<path d="M885.5 190.5 A100 100 0 0 0 785.50 290.50"/>
<path d="M885.5 190.5 A241.421 241.421 0 0 0 714.79 261.21"/>
</g>
<path d="M719.3 178.5 C720.3 176.1 722.2 168.5 725.2 164.3 C728.2 160.1 733.1 156.0 737.3 153.2 C741.5 150.4 745.2 148.6 750.4 147.6 C755.6 146.6 762.9 146.3 768.6 147.3 C774.3 148.3 780.6 150.9 784.8 153.7 C789.0 156.5 791.6 161.0 793.9 164.3 C796.2 167.6 797.7 171.9 798.5 173.4" fill="none" stroke="#0000ff" stroke-width="1" shape-rendering="crispEdges"/>
<path d="M797.8 223.3 C800.5 221.9 809.3 217.2 813.8 214.7 C818.3 212.1 822.5 209.6 825.0 208.0 C827.5 206.4 827.6 206.3 829.0 205.0 C830.4 203.7 832.3 201.9 833.6 200.3 C834.9 198.7 836.1 196.0 836.6 195.2" fill="none" stroke="#00ff00" stroke-width="1" shape-rendering="crispEdges"/>
<path d="M742.2 206.3 C743.1 207.2 746.1 209.8 747.7 211.4 C749.4 213.0 750.4 214.1 752.1 216.0 C753.9 217.9 756.1 220.7 758.2 223.0 C760.3 225.3 762.7 227.8 764.8 230.0 C766.9 232.2 768.8 234.4 771.0 236.0 C773.2 237.6 775.0 238.4 777.8 239.7 C780.6 241.0 784.4 242.7 787.6 243.6 C790.8 244.5 794.0 245.2 797.0 245.3 C800.0 245.5 802.4 245.1 805.9 244.5 C809.4 243.9 813.6 243.1 817.8 241.6 C822.0 240.1 826.7 238.4 830.9 235.7 C835.1 233.0 839.5 228.9 842.8 225.2 C846.1 221.5 848.8 216.6 850.6 213.4 C852.4 210.2 852.9 207.7 853.5 206.0 C854.1 204.3 854.3 203.9 854.5 203.5" fill="none" stroke="#ff0000" stroke-width="3.2" stroke-dasharray="9 5.8" stroke-dashoffset="3"/>
<circle cx="785.5" cy="190.5" r="100" fill="none" stroke="#000" stroke-width="1" shape-rendering="crispEdges"/>
<g fill="#fff"><rect x="806" y="177" width="11" height="13"/><rect x="839" y="177" width="11" height="13"/><rect x="876" y="176" width="10" height="14"/></g>
<path d="M685.5 190.5 H886.5" stroke="#000" stroke-width="1" shape-rendering="crispEdges"/>
<g font-family="Liberation Sans" font-size="13" fill="#000"><text x="808" y="190">2</text><text x="841" y="190">4</text><text x="877.2" y="190">6</text></g>
<g font-family="Liberation Sans" font-size="13">
<text transform="translate(660.5,190.5) rotate(-90)" text-anchor="middle" fill="#00ff00">S[2,2]</text>
<text transform="translate(675.5,190.5) rotate(-90)" text-anchor="middle" fill="#ff0000">S[1,1]</text>
<text transform="translate(891.5,189) rotate(90)" text-anchor="middle" fill="#0000ff">S[2,1]</text>
<text x="784" y="306.7" text-anchor="middle" fill="#0000ff">frequency</text>
<text x="784" y="321.6" text-anchor="middle" fill="#ff0000">frequency</text>
<text x="784" y="336.6" text-anchor="middle" fill="#00ff00">frequency</text>
</g><g fill="none" stroke="#c0c0c0" stroke-width="1" shape-rendering="crispEdges">
<circle cx="795.5" cy="450.5" r="33.333"/>
<circle cx="795.5" cy="450.5" r="66.667"/>
<path d="M795.5 350.5 V550.5 M695.5 450.5 H895.5" shape-rendering="crispEdges"/>
</g>
<path d="M814.2 382.1 C814.8 384.4 816.3 391.6 817.5 395.6 C818.7 399.7 820.1 402.6 821.6 406.4 C823.1 410.2 825.3 415.8 826.3 418.5 C827.3 421.2 827.4 420.7 827.6 422.6 C827.8 424.5 828.1 428.1 827.6 430.0 C827.1 431.9 825.9 432.4 824.9 434.0 C823.9 435.6 822.4 437.5 821.6 439.4 C820.8 441.3 820.4 444.5 820.2 445.5" fill="none" stroke="#0000ff" stroke-width="1" shape-rendering="crispEdges"/>
<circle cx="795.5" cy="450.5" r="100" fill="none" stroke="#000" stroke-width="1" shape-rendering="crispEdges"/>
<g fill="#fff"><rect x="817" y="452" width="19" height="11"/><rect x="850" y="452" width="20" height="11"/><rect x="886" y="452" width="20" height="11"/></g>
<g font-family="Liberation Sans" font-size="13" fill="#000"><text x="826.4" y="463" text-anchor="middle">0.1</text><text x="860" y="463" text-anchor="middle">0.2</text><text x="896.2" y="463" text-anchor="middle">0.3</text></g>
<text transform="translate(685.5,450.5) rotate(-90)" text-anchor="middle" fill="#0000ff" font-family="Liberation Sans" font-size="13">S[1,2]</text>
<text x="794" y="567" text-anchor="middle" fill="#0000ff" font-family="Liberation Sans" font-size="13">frequency</text><g shape-rendering="crispEdges" fill="none" stroke="#000" stroke-width="1">
<rect x="338.5" y="356.5" width="264" height="204"/>
<path d="M355.5 357 V560 M339 374.5 H602 M355 375.5 H602 M339 542.5 H355"/>
<path d="M427.5 357 V560 M428.5 357 V560"/>
</g>
<rect x="340" y="376" width="14" height="19" fill="#a0a0a4"/>
<path d="M347.5 360.5 L341.5 370.5 L353 370.5 Z" fill="#a0a0a4" stroke="#000" stroke-width="1"/>
<path d="M341.5 546 L353 546 L347.5 556.5 Z" fill="#a0a0a4" stroke="#000" stroke-width="1"/>
<g font-family="Liberation Sans" font-size="13" fill="#000"><text x="359" y="369.2">frequency</text><text x="436" y="369.2">StabK</text>
<text x="364" y="386.8">1e9</text><text x="436" y="386.8">1.09678</text>
<text x="364" y="401.8">1.29e9</text><text x="436" y="401.8">1.09099</text>
<text x="364" y="416.8">1.58e9</text><text x="436" y="416.8">1.08344</text>
<text x="364" y="431.8">1.87e9</text><text x="436" y="431.8">1.07498</text>
<text x="364" y="446.8">2.16e9</text><text x="436" y="446.8">1.06615</text>
<text x="364" y="461.8">2.45e9</text><text x="436" y="461.8">1.0574</text>
<text x="364" y="476.8">2.74e9</text><text x="436" y="476.8">1.04906</text>
<text x="364" y="491.8">3.03e9</text><text x="436" y="491.8">1.0414</text>
<text x="364" y="506.8">3.32e9</text><text x="436" y="506.8">1.03463</text>
<text x="364" y="521.8">3.61e9</text><text x="436" y="521.8">1.02888</text>
<text x="364" y="536.8">3.9e9</text><text x="436" y="536.8">1.02424</text>
<text x="364" y="551.8">4.19e9</text><text x="436" y="551.8">1.02077</text>
</g>
</g></svg><!--/CANVAS-->
</body></html>
